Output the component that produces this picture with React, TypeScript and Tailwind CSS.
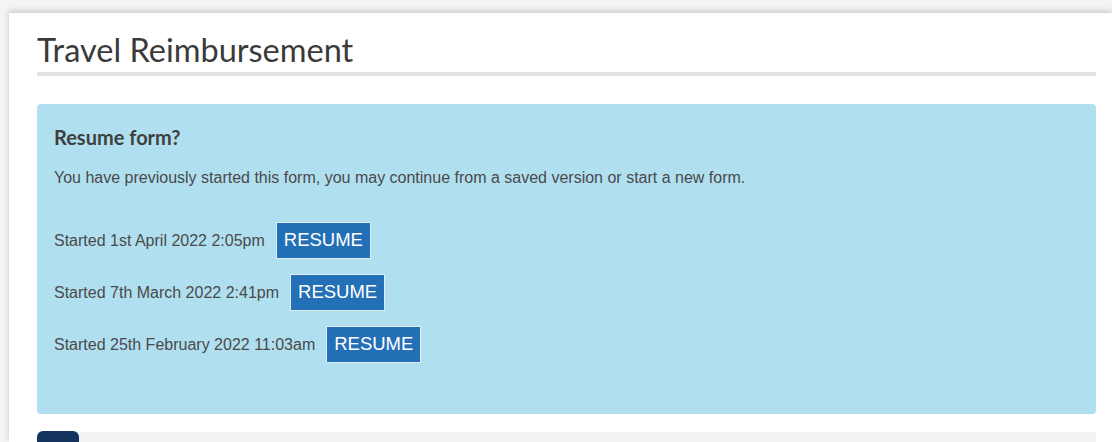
import React from 'react';

type SavedForm = { id: string; startedAt: string };

const savedForms: SavedForm[] = [
  { id: 'a1', startedAt: 'Started 1st April 2022 2:05pm' },
  { id: 'b2', startedAt: 'Started 7th March 2022 2:41pm' },
  { id: 'c3', startedAt: 'Started 25th February 2022 11:03am' },
];

function ResumeRow({ form }: { form: SavedForm }) {
  return (
    <div className="flex items-center h-[37px]">
      <span className="text-[16px] text-[#4a4a4a]">{form.startedAt}</span>
      <button className="ml-[11px] h-[37px] px-[7px] bg-[#2470b6] border border-[#dbeef6] text-white text-[18.5px] leading-none">
        RESUME
      </button>
    </div>
  );
}

export default function App() {
  return (
    <div className="w-[1112px] h-[442px] overflow-hidden bg-[#f4f4f4] pt-[13px] pl-[9px]">
      <div
        className="bg-white h-full shadow-[0_-2px_6px_rgba(0,0,0,0.18)] pl-[28px] pr-[16px] pt-[15px]"
        style={{ fontFamily: '"Liberation Sans", Arial, sans-serif' }}
      >
        <h1
          className="text-[32.5px] leading-[44px] text-[#3a3a3a] border-b-4 border-[#e3e3e3]"
          style={{ fontFamily: 'Lato, "Liberation Sans", sans-serif' }}
        >
          Travel Reimbursement
        </h1>

        <div className="mt-[28px] h-[310px] bg-[#b0dff0] rounded-[4px] pl-[17px] pt-[21px]">
          <h2
            className="text-[20px] font-bold text-[#3f3f3f] leading-[24px]"
            style={{ fontFamily: 'Lato, "Liberation Sans", sans-serif' }}
          >
            Resume form?
          </h2>
          <p className="mt-[20px] text-[16px] text-[#4a4a4a] leading-[18px]">
            You have previously started this form, you may continue from a saved version or start a new form.
          </p>
          <div className="mt-[35px] flex flex-col gap-[15px]">
            {savedForms.map((f) => (
              <ResumeRow key={f.id} form={f} />
            ))}
          </div>
        </div>

        <div className="mt-[17px] flex">
          <div className="w-[42px] h-[20px] bg-[#14335e] rounded-t-[6px]" />
          <div className="flex-1 mt-[1px] h-[20px] bg-[#f1f2f4]" />
        </div>
      </div>
    </div>
  );
}
